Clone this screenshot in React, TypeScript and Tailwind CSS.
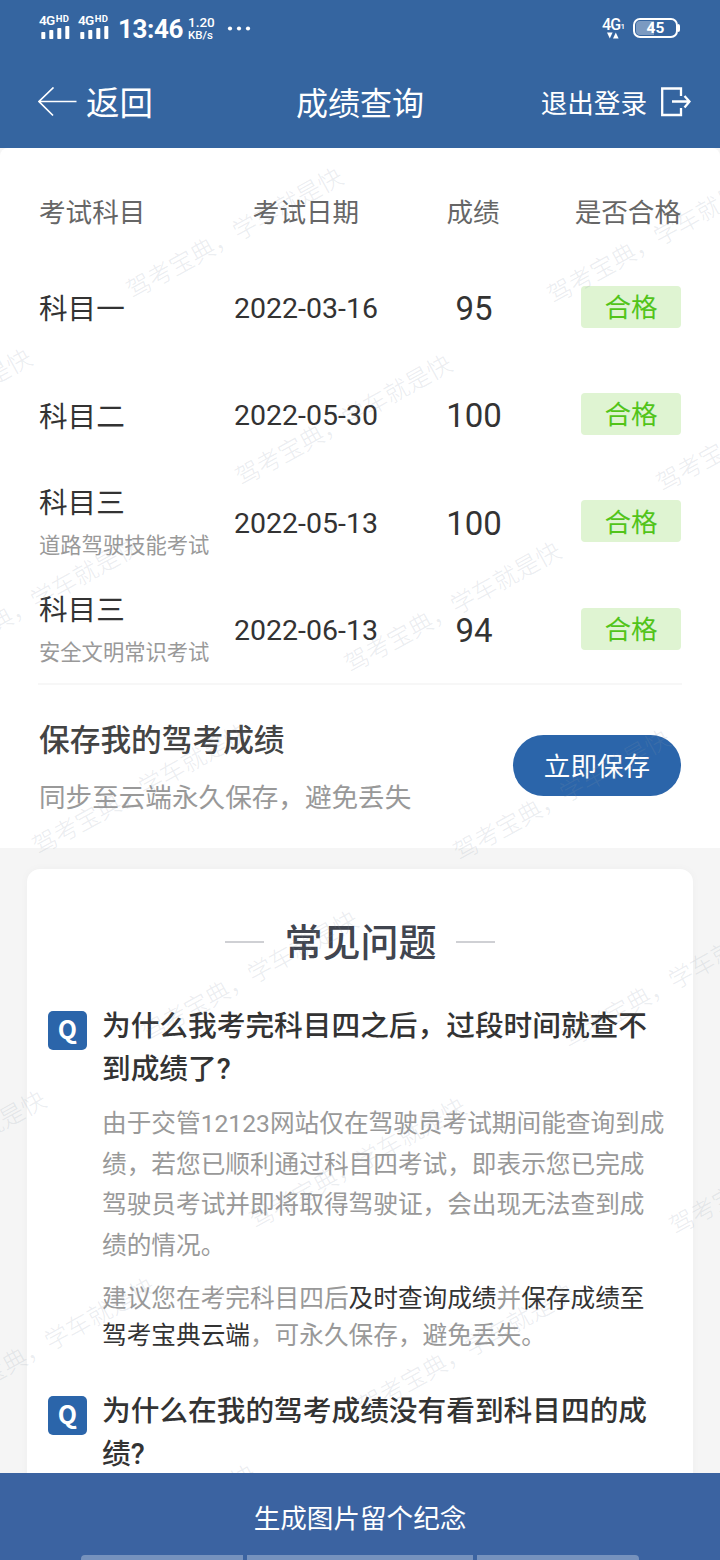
import React from 'react';

interface ScoreRow {
  subject: string;
  note?: string;
  date: string;
  score: number;
}

const scores: ScoreRow[] = [
  { subject: '科目一', date: '2022-03-16', score: 95 },
  { subject: '科目二', date: '2022-05-30', score: 100 },
  { subject: '科目三', note: '道路驾驶技能考试', date: '2022-05-13', score: 100 },
  { subject: '科目三', note: '安全文明常识考试', date: '2022-06-13', score: 94 },
];

// centre of the first character of every repeated mark
const marks = [
  [-281, 280], [139, 287], [560, 292],
  [-172, 468], [248, 474], [669, 480],
  [-63, 656], [357, 661],
  [45, 843], [466, 849],
  [154, 1030], [575, 1036],
  [-158, 1210], [262, 1217], [682, 1223],
  [-49, 1397], [371, 1403],
  [52, 1584], [472, 1592],
];

function Watermark() {
  return (
    <div className="pointer-events-none absolute inset-x-0 top-[148px] bottom-[87px] overflow-hidden">
      {marks.map(([x, y]) => (
        <span
          key={`${x}-${y}`}
          className="absolute origin-[12px_18px] -rotate-[29deg] font-light whitespace-nowrap text-[24.3px] leading-[36px] text-[#8a96a8]/18"
          style={{ left: x - 12, top: y - 148 - 18 }}
        >
          驾考宝典，学车就是快
        </span>
      ))}
    </div>
  );
}

function Signal() {
  return (
    <div className="flex w-[32px] flex-col">
      <div className="flex h-[12px] items-start gap-px font-semibold">
        <span className="text-[13.5px] leading-[13px] tracking-[-0.6px]">4G</span>
        <span className="text-[9.5px] leading-[10px] font-bold tracking-[0.2px]">HD</span>
      </div>
      <svg width="32" height="13" viewBox="0 0 32 13" fill="currentColor">
        <rect x="2.3" y="6" width="4" height="7" rx="0.8" />
        <rect x="10.3" y="4" width="4" height="9" rx="0.8" />
        <rect x="18.3" y="2" width="4" height="11" rx="0.8" />
        <rect x="26.3" y="0" width="4" height="13" rx="0.8" />
      </svg>
    </div>
  );
}

function StatusBar() {
  return (
    <div className="flex h-[56px] items-center justify-between pr-[40px] pl-[39px]">
      <div className="flex items-center">
        <div className="flex gap-[7px] pb-[4px]">
          <Signal />
          <Signal />
        </div>
        <span className="ml-[8px] w-[66px] pt-px text-[26px] leading-[30px] font-bold tracking-[-0.4px]">13:46</span>
        <div className="ml-[4px] flex w-[30px] flex-col font-medium">
          <span className="text-[13.5px] leading-[13px]">1.20</span>
          <span className="text-[11.5px] leading-[12px]">KB/s</span>
        </div>
        <svg className="ml-[9px]" width="24" height="6" viewBox="0 0 24 6" fill="currentColor">
          <circle cx="3" cy="3.5" r="2.1" />
          <circle cx="12" cy="3.5" r="2.1" />
          <circle cx="21" cy="3.5" r="2.1" />
        </svg>
      </div>
      <div className="flex items-center">
        <div className="flex w-[24px] flex-col">
          <div className="flex items-end">
            <span className="text-[16px] leading-[15px] font-medium tracking-[-0.8px]">4G</span>
            <span className="text-[8px] leading-[10px] font-medium">1</span>
          </div>
          <svg width="18" height="7" viewBox="0 0 18 7" fill="currentColor">
            <path d="M5 0.500h5.600L7.800 6.500z" />
            <path d="M11 6.500h5.600L13.800 0.500z" />
          </svg>
        </div>
        <div className="ml-[7px] flex items-center">
          <div className="relative flex h-[20px] w-[45px] items-center justify-center rounded-[7px] border-2 border-white">
            <div className="absolute top-[1px] bottom-[1px] left-[1px] w-[18px] rounded-l-[4px] bg-white/35"></div>
            <span className="relative text-[15.500px] leading-[16px] font-bold">45</span>
          </div>
          <div className="h-[8px] w-[2px] rounded-r-sm bg-white"></div>
        </div>
      </div>
    </div>
  );
}

function NavBar() {
  return (
    <div className="grid h-[92px] grid-cols-[1fr_140px_1fr] items-center pr-[29px] pl-[29px]">
      <div className="flex items-center pl-[9px]">
        <svg width="40" height="30" viewBox="0 0 40 30" fill="none" stroke="currentColor" strokeWidth="1.7">
          <path d="M38.500 14.500H1M15.500 0.500L1 14.500l14 14" />
        </svg>
        <span className="ml-[8px] pt-[3px] text-[33.500px] leading-[48px]">返回</span>
      </div>
      <span className="pt-[3px] text-center text-[32px] leading-[48px]">成绩查询</span>
      <div className="flex items-center justify-end">
        <span className="pt-[3px] text-[26.600px] leading-[40px] whitespace-nowrap">退出登录</span>
        <svg className="ml-[13px] shrink-0" width="31" height="30" viewBox="0 0 31 30" fill="none" stroke="currentColor" strokeWidth="2.300">
          <path d="M21 9V1.500H2.200v26.500H21v-7" />
          <path d="M12 14.500h17M24.500 9L29.500 14.500l-5 6" />
        </svg>
      </div>
    </div>
  );
}

function ScoreTable() {
  return (
    <div className="mx-[38px] h-[537px] border-b-2 border-[#f7f7f7] pl-px">
      <div className="flex h-[105px] items-center pt-[24px] text-[26.600px] text-[#666]">
        <span className="w-[171px]">考试科目</span>
        <span className="w-[192px] text-center">考试日期</span>
        <span className="w-[142px] text-center">成绩</span>
        <span className="flex-1 pr-px text-right whitespace-nowrap">是否合格</span>
      </div>
      {scores.map((row) => (
        <div key={row.date} className="flex h-[107.400px] items-center text-[#333]">
          <div className="flex w-[171px] flex-col pt-[6px]">
            <span className="text-[28.600px] leading-[43px]">{row.subject}</span>
            {row.note && (
              <span className="text-[21.300px] leading-[42px] whitespace-nowrap text-[#999]">{row.note}</span>
            )}
          </div>
          <span className="w-[192px] pt-[5px] text-center text-[28.500px]">{row.date}</span>
          <span className="w-[143px] pt-[4px] pl-px text-center text-[33px]">{row.score}</span>
          <div className="flex flex-1 justify-end pr-px">
            <span className="flex h-[42px] w-[100px] items-center justify-center rounded-[4px] bg-[#dff4d2] pt-[2px] text-[26.600px] text-[#52c41a]">
              合格
            </span>
          </div>
        </div>
      ))}
    </div>
  );
}

function SaveBanner() {
  return (
    <div className="flex h-[163px] items-center justify-between pr-[39px] pl-[39px]">
      <div className="flex flex-col pt-[5px]">
        <span className="text-[30.700px] leading-[57px] font-medium text-[#444]">保存我的驾考成绩</span>
        <span className="text-[26.600px] leading-[57px] text-[#999]">同步至云端永久保存，避免丢失</span>
      </div>
      <button className="mb-[2px] h-[61px] w-[168px] rounded-full bg-[#2b65aa] pt-[3px] text-[26.600px] text-white">
        立即保存
      </button>
    </div>
  );
}

function Question({ title, children }: { title: React.ReactNode; children?: React.ReactNode }) {
  return (
    <div className="flex pl-[21px]">
      <div className="mt-[6px] flex h-[39px] w-[39px] shrink-0 items-center justify-center rounded-[5px] bg-[#2b65aa] pb-[3px] font-['Noto_Sans_CJK_SC'] text-[25px] font-bold text-white">
        Q
      </div>
      <div className="ml-[15px]">
        <h3 className="text-[28.700px] leading-[42.700px] font-medium whitespace-nowrap text-[#333]">{title}</h3>
        {children}
      </div>
    </div>
  );
}

function Faq() {
  return (
    <div className="mx-[27px] mt-[21px] h-[700px] rounded-t-[13px] bg-white shadow-[0_0_10px_rgba(0,0,0,0.03)]">
      <div className="flex h-[136px] items-center justify-center gap-[19px] pt-[9px]">
        <div className="h-[2px] w-[39px] bg-[#cfd0d4]"></div>
        <h2 className="pt-[3px] pl-px text-[38px] leading-[56px] font-medium text-[#41454f]">常见问题</h2>
        <div className="h-[2px] w-[39px] bg-[#cfd0d4]"></div>
      </div>
      <Question
        title={
          <>
            为什么我考完科目四之后，过段时间就查不
            <br />
            到成绩了?
          </>
        }
      >
        <p className="mt-[14px] text-[24.660px] leading-[40.400px] whitespace-nowrap text-[#999]">
          由于交管12123网站仅在驾驶员考试期间能查询到成
          <br />
          绩，若您已顺利通过科目四考试，即表示您已完成
          <br />
          驾驶员考试并即将取得驾驶证，会出现无法查到成
          <br />
          绩的情况。
        </p>
        <p className="mt-[15px] mb-[36px] text-[24.660px] leading-[36.600px] whitespace-nowrap text-[#999]">
          建议您在考完科目四后<span className="text-[#333]">及时查询成绩</span>并
          <span className="text-[#333]">保存成绩至</span>
          <br />
          <span className="text-[#333]">驾考宝典云端</span>，可永久保存，避免丢失。
        </p>
      </Question>
      <Question
        title={
          <>
            为什么在我的驾考成绩没有看到科目四的成
            <br />
            绩?
          </>
        }
      />
    </div>
  );
}

export default function App() {
  return (
    <div
      lang="zh-CN"
      className="relative flex h-[1560px] w-[720px] flex-col overflow-hidden bg-[#f5f5f5] font-[Roboto,'Noto_Sans_CJK_SC',sans-serif]"
    >
      <header className="h-[148px] shrink-0 bg-[#3565a0] text-white">
        <StatusBar />
        <NavBar />
      </header>
      <main className="h-[1325px] shrink-0 overflow-hidden">
        <section className="h-[700px] rounded-t-[8px] bg-white">
          <ScoreTable />
          <SaveBanner />
        </section>
        <Faq />
      </main>
      <Watermark />
      <footer className="flex h-[87px] shrink-0 flex-col bg-[#3b63a1] text-white">
        <button className="h-[82px] pt-[9px] text-[26.600px]">生成图片留个纪念</button>
        <div className="flex h-[5px] justify-center gap-[4px]">
          <div className="w-[162px] rounded-tl bg-white/30"></div>
          <div className="w-[226px] bg-white/30"></div>
          <div className="w-[162px] rounded-tr bg-white/30"></div>
        </div>
      </footer>
    </div>
  );
}
